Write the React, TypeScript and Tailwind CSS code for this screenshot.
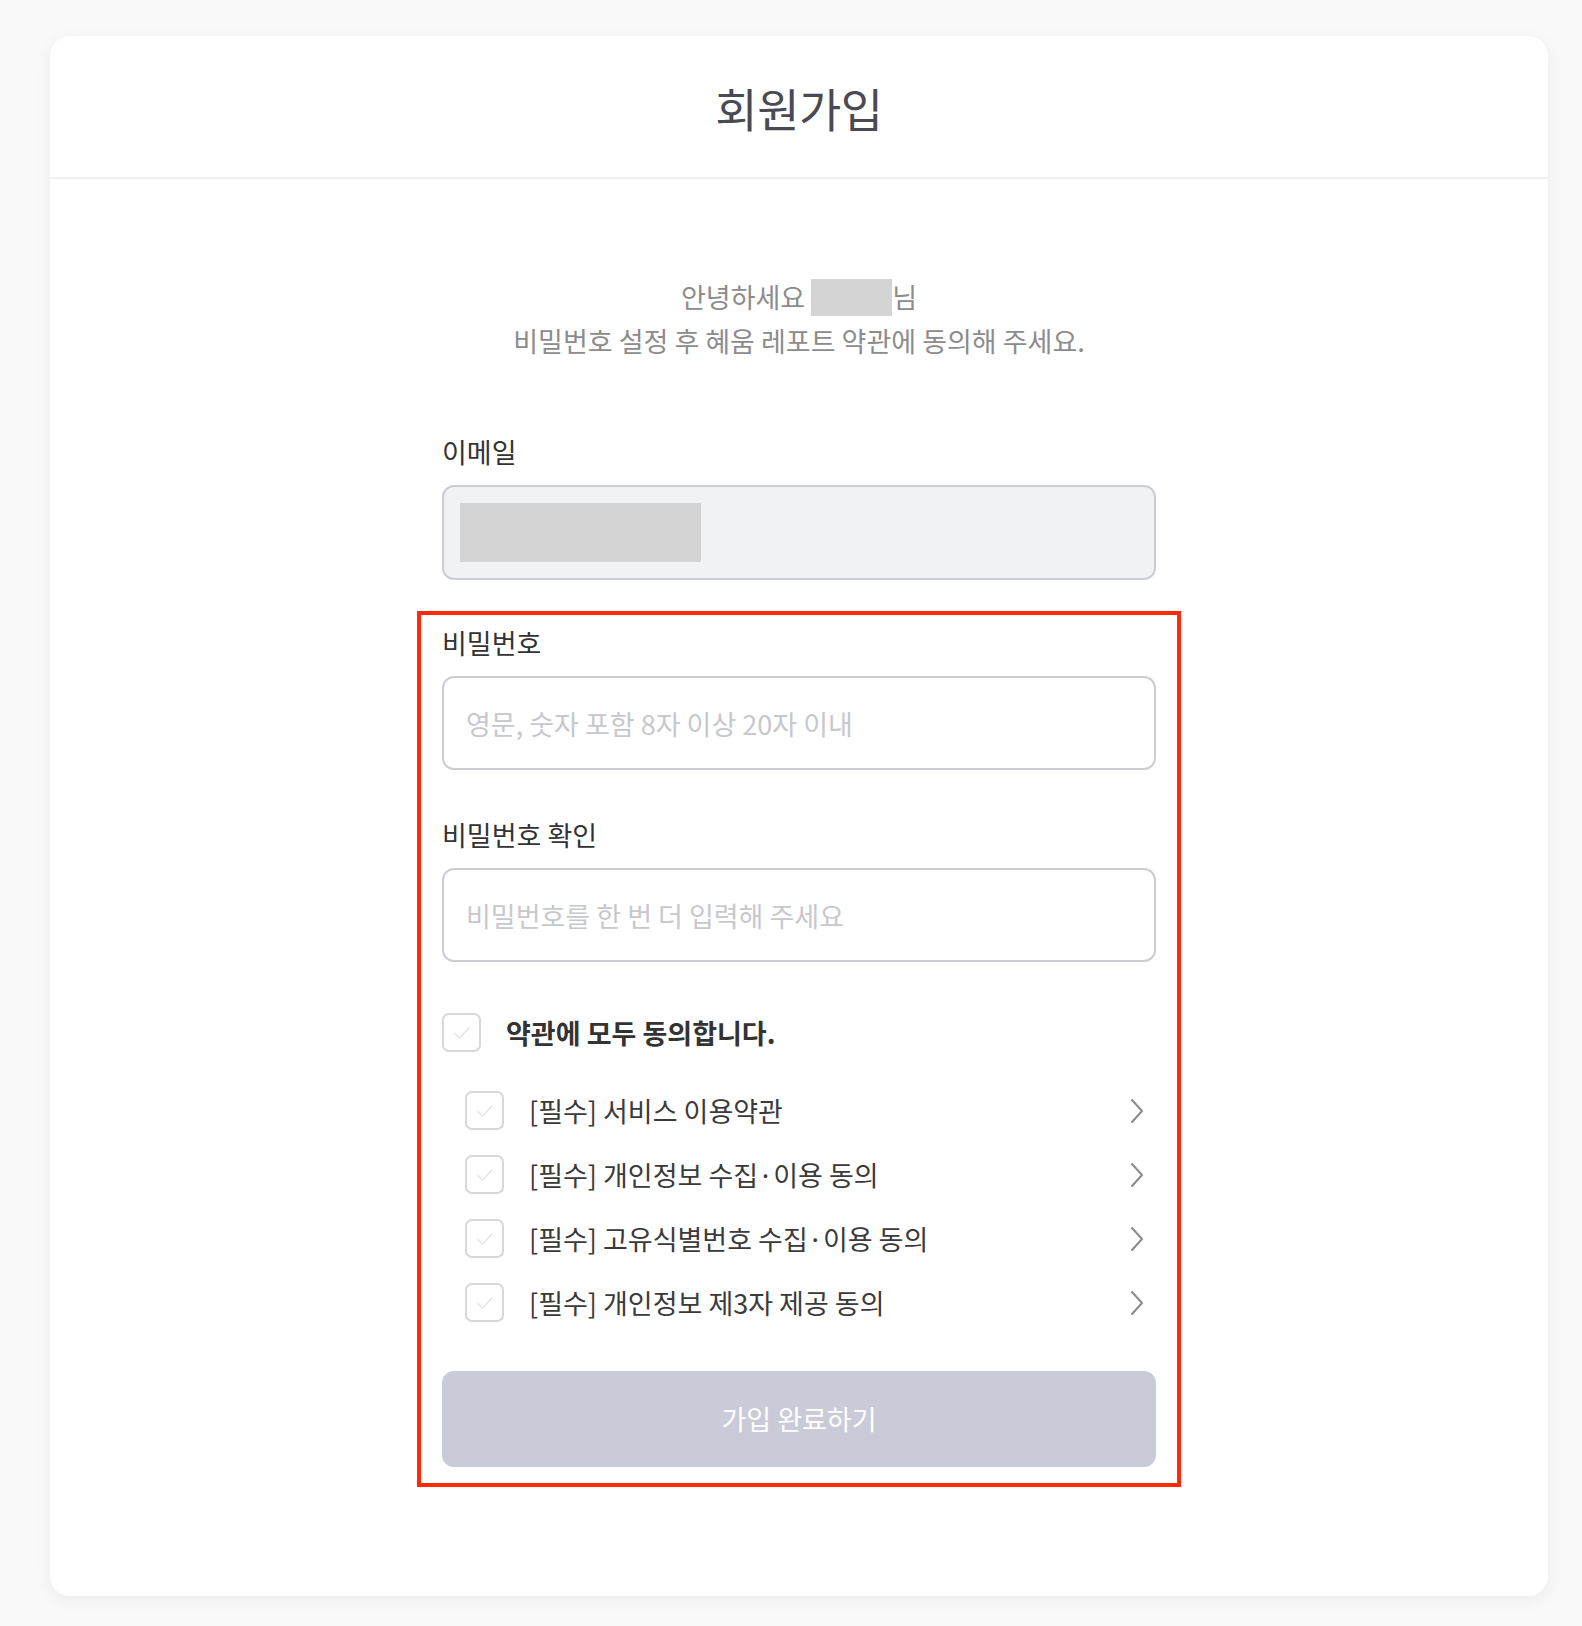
const terms = [
  '[필수] 서비스 이용약관',
  '[필수] 개인정보 수집·이용 동의',
  '[필수] 고유식별번호 수집·이용 동의',
  '[필수] 개인정보 제3자 제공 동의',
];

const CheckBox = () => (
  <div className="w-[39px] h-[39px] shrink-0 rounded-[7px] border-2 border-[#d6d8dc] bg-white flex items-center justify-center">
    <svg width="22" height="22" viewBox="0 0 22 22" fill="none">
      <path d="M4 11.5l4.5 4.5 9.5-10" stroke="#e4e5e8" strokeWidth="1.6" strokeLinecap="round" strokeLinejoin="round" />
    </svg>
  </div>
);

const Chevron = () => (
  <svg width="14" height="26" viewBox="0 0 14 26" fill="none" className="mr-[12px] shrink-0">
    <path d="M2 2l10 11-10 11" stroke="#8a8a8a" strokeWidth="2" strokeLinecap="round" strokeLinejoin="round" />
  </svg>
);

const App = () => {
  return (
    <div className="min-h-[1626px] bg-[#f9f9f9] pt-[36px] font-['Noto_Sans_CJK_KR',sans-serif]">
      <div className="ml-[50px] w-[1498px] h-[1560px] bg-white rounded-[20px] shadow-[0_4px_16px_rgba(0,0,0,0.06)]">
        {/* Header */}
        <div className="h-[143px] flex items-center justify-center border-b-2 border-[#f1f1f1]">
          <h1 className="text-[46px] leading-none text-[#4a4a52] tracking-[-0.5px]">회원가입</h1>
        </div>

        <div className="w-[714px] mx-auto pt-[96px]">
          {/* Greeting */}
          <div className="text-center text-[27px] leading-[44px] text-[#8c8c8c]">
            <p className="flex items-center justify-center">
              안녕하세요
              <span className="inline-block w-[81px] h-[37px] bg-[#d4d4d4] ml-[6px]" />
              님
            </p>
            <p>비밀번호 설정 후 혜움 레포트 약관에 동의해 주세요.</p>
          </div>

          {/* Email */}
          <label className="block mt-[71px] text-[27px] leading-[36px] text-[#333333]">이메일</label>
          <div className="mt-[15px] h-[95px] rounded-[12px] border-2 border-[#cbcdd3] bg-[#f1f2f4] flex items-center px-[16px]">
            <div className="w-[241px] h-[59px] bg-[#d4d4d4]" />
          </div>

          {/* Highlighted section */}
          <div className="-mx-[25px] mt-[31px] border-4 border-[#ff2a0a] px-[21px] pt-[10px] pb-[16px]">
            <label className="block text-[27px] leading-[36px] text-[#333333]">비밀번호</label>
            <input
              type="password"
              placeholder="영문, 숫자 포함 8자 이상 20자 이내"
              className="mt-[15px] w-full h-[94px] rounded-[12px] border-2 border-[#cbcdd3] bg-white px-[22px] text-[27px] text-[#333] outline-none placeholder:text-[#c6c8cd]"
            />

            <label className="block mt-[47px] text-[27px] leading-[36px] text-[#333333]">비밀번호 확인</label>
            <input
              type="password"
              placeholder="비밀번호를 한 번 더 입력해 주세요"
              className="mt-[15px] w-full h-[94px] rounded-[12px] border-2 border-[#cbcdd3] bg-white px-[22px] text-[27px] text-[#333] outline-none placeholder:text-[#c6c8cd]"
            />

            {/* Agree all */}
            <div className="mt-[51px] flex items-center gap-[25px]">
              <CheckBox />
              <span className="text-[27px] font-bold text-[#333333] leading-none">약관에 모두 동의합니다.</span>
            </div>

            {/* Terms */}
            <div className="mt-[39px] pl-[23px] flex flex-col gap-[25px]">
              {terms.map((t) => (
                <div key={t} className="flex items-center gap-[25px]">
                  <CheckBox />
                  <span className="flex-1 text-[27px] leading-none text-[#3a3a3a]">{t}</span>
                  <Chevron />
                </div>
              ))}
            </div>

            {/* Submit */}
            <button className="mt-[49px] w-full h-[96px] rounded-[12px] bg-[#c9cbd8] text-white text-[27px]">
              가입 완료하기
            </button>
          </div>
        </div>
      </div>
    </div>
  );
};

export default App;
